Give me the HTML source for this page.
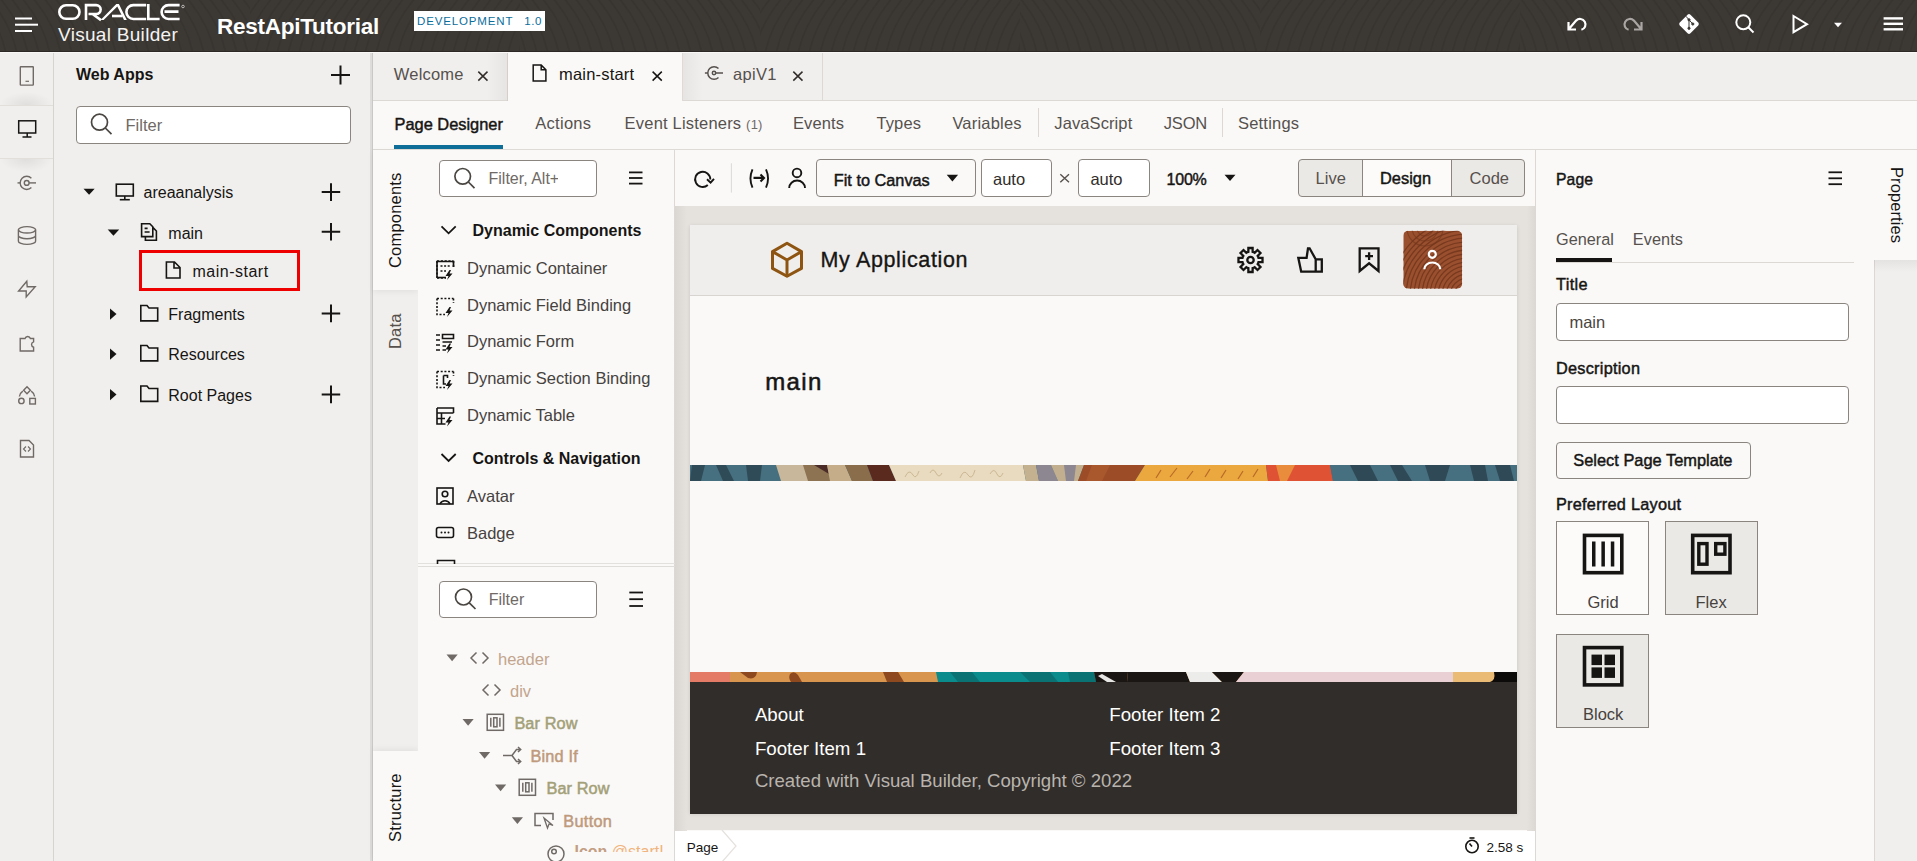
<!DOCTYPE html>
<html><head><meta charset="utf-8">
<style>
*{box-sizing:border-box;margin:0;padding:0}
html,body{width:1917px;height:861px;overflow:hidden;background:#faf9f8;font-family:"Liberation Sans",sans-serif;color:#161513}
.a{position:absolute}
.t{position:absolute;white-space:nowrap;line-height:1}
svg{position:absolute;overflow:visible}
/* header */
#hdr{left:0;top:0;width:1917px;height:52px;background:#3c3834;overflow:hidden;border-bottom:1px solid #2c2825}
/* left icon bar */
#ibar{left:0;top:52px;width:54px;height:809px;background:#f1efed;border-right:1px solid #d6d4d1}
#wapps{left:54px;top:52px;width:317px;height:809px;background:#f1efed}
#div1{left:370px;top:52px;width:3px;height:809px;background:linear-gradient(to right,#dddcda 0,#dddcda 2px,#c9c8c6 2px,#c9c8c6 3px)}
/* center */
#tabs{left:373px;top:52px;width:1544px;height:49px;background:#f1efed;border-bottom:1px solid #dcd9d5}
#subtabs{left:373px;top:101px;width:1544px;height:49px;background:#faf9f8;border-bottom:1px solid #dedbd7}
#vtabs{left:373px;top:150px;width:45px;height:711px;background:#f1efed}
#comp{left:418px;top:150px;width:257px;height:711px;background:#faf9f8;border-right:1px solid #dcd9d5}
#canvas{left:675px;top:206px;width:860px;height:624px;background:#e5e2de}
#ctool{left:675px;top:150px;width:860px;height:56px;background:#faf9f8}
#props{left:1535px;top:150px;width:339px;height:711px;background:#faf9f8;border-left:1px solid #dcd9d5;border-right:1px solid #dcd9d5}
#pstrip{left:1874px;top:150px;width:43px;height:711px;background:#f1efed}
.inp{position:absolute;background:#fff;border:1px solid #8b8580;border-radius:4px}
.ph{color:#6f6a66}
.ic{stroke:#161513;fill:none;stroke-width:1.6}
</style></head><body>

<!-- HEADER -->
<div id="hdr" class="a">
  <svg width="1917" height="52" style="left:0;top:0"><defs><clipPath id="hc0"><rect x="0" y="0" width="250" height="51"/></clipPath><clipPath id="hc1"><rect x="250" y="0" width="270" height="51"/></clipPath><clipPath id="hc2"><rect x="520" y="0" width="240" height="51"/></clipPath><clipPath id="hc3"><rect x="760" y="0" width="260" height="51"/></clipPath><clipPath id="hc4"><rect x="1020" y="0" width="240" height="51"/></clipPath><clipPath id="hc5"><rect x="1260" y="0" width="260" height="51"/></clipPath><clipPath id="hc6"><rect x="1520" y="0" width="220" height="51"/></clipPath><clipPath id="hc7"><rect x="1740" y="0" width="177" height="51"/></clipPath></defs><path clip-path="url(#hc0)" d="M-66,-2 Q-43,26 -38,54 M-55,-2 Q-32,26 -27,54 M-44,-2 Q-21,26 -16,54 M-33,-2 Q-10,26 -5,54 M-22,-2 Q1,26 6,54 M-11,-2 Q12,26 17,54 M0,-2 Q23,26 28,54 M11,-2 Q34,26 39,54 M22,-2 Q45,26 50,54 M33,-2 Q56,26 61,54 M44,-2 Q67,26 72,54 M55,-2 Q78,26 83,54 M66,-2 Q89,26 94,54 M77,-2 Q100,26 105,54 M88,-2 Q111,26 116,54 M99,-2 Q122,26 127,54 M110,-2 Q133,26 138,54 M121,-2 Q144,26 149,54 M132,-2 Q155,26 160,54 M143,-2 Q166,26 171,54 M154,-2 Q177,26 182,54 M165,-2 Q188,26 193,54 M176,-2 Q199,26 204,54 M187,-2 Q210,26 215,54 M198,-2 Q221,26 226,54 M209,-2 Q232,26 237,54 M220,-2 Q243,26 248,54 M231,-2 Q254,26 259,54 M242,-2 Q265,26 270,54 M253,-2 Q276,26 281,54 M264,-2 Q287,26 292,54 M275,-2 Q298,26 303,54 M286,-2 Q309,26 314,54 M297,-2 Q320,26 325,54" stroke="#33302c" stroke-width="1.5" fill="none" opacity="0.45"/><path clip-path="url(#hc1)" d="M184,-2 Q161,26 156,54 M195,-2 Q172,26 167,54 M206,-2 Q183,26 178,54 M217,-2 Q194,26 189,54 M228,-2 Q205,26 200,54 M239,-2 Q216,26 211,54 M250,-2 Q227,26 222,54 M261,-2 Q238,26 233,54 M272,-2 Q249,26 244,54 M283,-2 Q260,26 255,54 M294,-2 Q271,26 266,54 M305,-2 Q282,26 277,54 M316,-2 Q293,26 288,54 M327,-2 Q304,26 299,54 M338,-2 Q315,26 310,54 M349,-2 Q326,26 321,54 M360,-2 Q337,26 332,54 M371,-2 Q348,26 343,54 M382,-2 Q359,26 354,54 M393,-2 Q370,26 365,54 M404,-2 Q381,26 376,54 M415,-2 Q392,26 387,54 M426,-2 Q403,26 398,54 M437,-2 Q414,26 409,54 M448,-2 Q425,26 420,54 M459,-2 Q436,26 431,54 M470,-2 Q447,26 442,54 M481,-2 Q458,26 453,54 M492,-2 Q469,26 464,54 M503,-2 Q480,26 475,54 M514,-2 Q491,26 486,54 M525,-2 Q502,26 497,54 M536,-2 Q513,26 508,54 M547,-2 Q524,26 519,54 M558,-2 Q535,26 530,54 M569,-2 Q546,26 541,54" stroke="#33302c" stroke-width="1.5" fill="none" opacity="0.45"/><path clip-path="url(#hc2)" d="M454,-2 Q477,26 482,54 M465,-2 Q488,26 493,54 M476,-2 Q499,26 504,54 M487,-2 Q510,26 515,54 M498,-2 Q521,26 526,54 M509,-2 Q532,26 537,54 M520,-2 Q543,26 548,54 M531,-2 Q554,26 559,54 M542,-2 Q565,26 570,54 M553,-2 Q576,26 581,54 M564,-2 Q587,26 592,54 M575,-2 Q598,26 603,54 M586,-2 Q609,26 614,54 M597,-2 Q620,26 625,54 M608,-2 Q631,26 636,54 M619,-2 Q642,26 647,54 M630,-2 Q653,26 658,54 M641,-2 Q664,26 669,54 M652,-2 Q675,26 680,54 M663,-2 Q686,26 691,54 M674,-2 Q697,26 702,54 M685,-2 Q708,26 713,54 M696,-2 Q719,26 724,54 M707,-2 Q730,26 735,54 M718,-2 Q741,26 746,54 M729,-2 Q752,26 757,54 M740,-2 Q763,26 768,54 M751,-2 Q774,26 779,54 M762,-2 Q785,26 790,54 M773,-2 Q796,26 801,54 M784,-2 Q807,26 812,54 M795,-2 Q818,26 823,54 M806,-2 Q829,26 834,54" stroke="#33302c" stroke-width="1.5" fill="none" opacity="0.45"/><path clip-path="url(#hc3)" d="M694,-2 Q671,26 666,54 M705,-2 Q682,26 677,54 M716,-2 Q693,26 688,54 M727,-2 Q704,26 699,54 M738,-2 Q715,26 710,54 M749,-2 Q726,26 721,54 M760,-2 Q737,26 732,54 M771,-2 Q748,26 743,54 M782,-2 Q759,26 754,54 M793,-2 Q770,26 765,54 M804,-2 Q781,26 776,54 M815,-2 Q792,26 787,54 M826,-2 Q803,26 798,54 M837,-2 Q814,26 809,54 M848,-2 Q825,26 820,54 M859,-2 Q836,26 831,54 M870,-2 Q847,26 842,54 M881,-2 Q858,26 853,54 M892,-2 Q869,26 864,54 M903,-2 Q880,26 875,54 M914,-2 Q891,26 886,54 M925,-2 Q902,26 897,54 M936,-2 Q913,26 908,54 M947,-2 Q924,26 919,54 M958,-2 Q935,26 930,54 M969,-2 Q946,26 941,54 M980,-2 Q957,26 952,54 M991,-2 Q968,26 963,54 M1002,-2 Q979,26 974,54 M1013,-2 Q990,26 985,54 M1024,-2 Q1001,26 996,54 M1035,-2 Q1012,26 1007,54 M1046,-2 Q1023,26 1018,54 M1057,-2 Q1034,26 1029,54 M1068,-2 Q1045,26 1040,54" stroke="#33302c" stroke-width="1.5" fill="none" opacity="0.45"/><path clip-path="url(#hc4)" d="M954,-2 Q977,26 982,54 M965,-2 Q988,26 993,54 M976,-2 Q999,26 1004,54 M987,-2 Q1010,26 1015,54 M998,-2 Q1021,26 1026,54 M1009,-2 Q1032,26 1037,54 M1020,-2 Q1043,26 1048,54 M1031,-2 Q1054,26 1059,54 M1042,-2 Q1065,26 1070,54 M1053,-2 Q1076,26 1081,54 M1064,-2 Q1087,26 1092,54 M1075,-2 Q1098,26 1103,54 M1086,-2 Q1109,26 1114,54 M1097,-2 Q1120,26 1125,54 M1108,-2 Q1131,26 1136,54 M1119,-2 Q1142,26 1147,54 M1130,-2 Q1153,26 1158,54 M1141,-2 Q1164,26 1169,54 M1152,-2 Q1175,26 1180,54 M1163,-2 Q1186,26 1191,54 M1174,-2 Q1197,26 1202,54 M1185,-2 Q1208,26 1213,54 M1196,-2 Q1219,26 1224,54 M1207,-2 Q1230,26 1235,54 M1218,-2 Q1241,26 1246,54 M1229,-2 Q1252,26 1257,54 M1240,-2 Q1263,26 1268,54 M1251,-2 Q1274,26 1279,54 M1262,-2 Q1285,26 1290,54 M1273,-2 Q1296,26 1301,54 M1284,-2 Q1307,26 1312,54 M1295,-2 Q1318,26 1323,54 M1306,-2 Q1329,26 1334,54" stroke="#33302c" stroke-width="1.5" fill="none" opacity="0.45"/><path clip-path="url(#hc5)" d="M1194,-2 Q1171,26 1166,54 M1205,-2 Q1182,26 1177,54 M1216,-2 Q1193,26 1188,54 M1227,-2 Q1204,26 1199,54 M1238,-2 Q1215,26 1210,54 M1249,-2 Q1226,26 1221,54 M1260,-2 Q1237,26 1232,54 M1271,-2 Q1248,26 1243,54 M1282,-2 Q1259,26 1254,54 M1293,-2 Q1270,26 1265,54 M1304,-2 Q1281,26 1276,54 M1315,-2 Q1292,26 1287,54 M1326,-2 Q1303,26 1298,54 M1337,-2 Q1314,26 1309,54 M1348,-2 Q1325,26 1320,54 M1359,-2 Q1336,26 1331,54 M1370,-2 Q1347,26 1342,54 M1381,-2 Q1358,26 1353,54 M1392,-2 Q1369,26 1364,54 M1403,-2 Q1380,26 1375,54 M1414,-2 Q1391,26 1386,54 M1425,-2 Q1402,26 1397,54 M1436,-2 Q1413,26 1408,54 M1447,-2 Q1424,26 1419,54 M1458,-2 Q1435,26 1430,54 M1469,-2 Q1446,26 1441,54 M1480,-2 Q1457,26 1452,54 M1491,-2 Q1468,26 1463,54 M1502,-2 Q1479,26 1474,54 M1513,-2 Q1490,26 1485,54 M1524,-2 Q1501,26 1496,54 M1535,-2 Q1512,26 1507,54 M1546,-2 Q1523,26 1518,54 M1557,-2 Q1534,26 1529,54 M1568,-2 Q1545,26 1540,54" stroke="#33302c" stroke-width="1.5" fill="none" opacity="0.45"/><path clip-path="url(#hc6)" d="M1454,-2 Q1477,26 1482,54 M1465,-2 Q1488,26 1493,54 M1476,-2 Q1499,26 1504,54 M1487,-2 Q1510,26 1515,54 M1498,-2 Q1521,26 1526,54 M1509,-2 Q1532,26 1537,54 M1520,-2 Q1543,26 1548,54 M1531,-2 Q1554,26 1559,54 M1542,-2 Q1565,26 1570,54 M1553,-2 Q1576,26 1581,54 M1564,-2 Q1587,26 1592,54 M1575,-2 Q1598,26 1603,54 M1586,-2 Q1609,26 1614,54 M1597,-2 Q1620,26 1625,54 M1608,-2 Q1631,26 1636,54 M1619,-2 Q1642,26 1647,54 M1630,-2 Q1653,26 1658,54 M1641,-2 Q1664,26 1669,54 M1652,-2 Q1675,26 1680,54 M1663,-2 Q1686,26 1691,54 M1674,-2 Q1697,26 1702,54 M1685,-2 Q1708,26 1713,54 M1696,-2 Q1719,26 1724,54 M1707,-2 Q1730,26 1735,54 M1718,-2 Q1741,26 1746,54 M1729,-2 Q1752,26 1757,54 M1740,-2 Q1763,26 1768,54 M1751,-2 Q1774,26 1779,54 M1762,-2 Q1785,26 1790,54 M1773,-2 Q1796,26 1801,54 M1784,-2 Q1807,26 1812,54 M1795,-2 Q1818,26 1823,54" stroke="#33302c" stroke-width="1.5" fill="none" opacity="0.45"/><path clip-path="url(#hc7)" d="M1674,-2 Q1651,26 1646,54 M1685,-2 Q1662,26 1657,54 M1696,-2 Q1673,26 1668,54 M1707,-2 Q1684,26 1679,54 M1718,-2 Q1695,26 1690,54 M1729,-2 Q1706,26 1701,54 M1740,-2 Q1717,26 1712,54 M1751,-2 Q1728,26 1723,54 M1762,-2 Q1739,26 1734,54 M1773,-2 Q1750,26 1745,54 M1784,-2 Q1761,26 1756,54 M1795,-2 Q1772,26 1767,54 M1806,-2 Q1783,26 1778,54 M1817,-2 Q1794,26 1789,54 M1828,-2 Q1805,26 1800,54 M1839,-2 Q1816,26 1811,54 M1850,-2 Q1827,26 1822,54 M1861,-2 Q1838,26 1833,54 M1872,-2 Q1849,26 1844,54 M1883,-2 Q1860,26 1855,54 M1894,-2 Q1871,26 1866,54 M1905,-2 Q1882,26 1877,54 M1916,-2 Q1893,26 1888,54 M1927,-2 Q1904,26 1899,54 M1938,-2 Q1915,26 1910,54 M1949,-2 Q1926,26 1921,54 M1960,-2 Q1937,26 1932,54 M1971,-2 Q1948,26 1943,54" stroke="#33302c" stroke-width="1.5" fill="none" opacity="0.45"/></svg>
  <svg width="1917" height="52" style="left:0;top:0">
    <g stroke="#fff" stroke-width="2" fill="none">
      <line x1="15" y1="18.5" x2="32" y2="18.5"/><line x1="15" y1="24.7" x2="38" y2="24.7"/><line x1="15" y1="31" x2="32" y2="31"/>
    </g>
    <g stroke="#fff" stroke-width="2.6" fill="none">
      <rect x="59.3" y="5.3" width="20.2" height="13.5" rx="6.75"/>
      <path d="M86,20.1 V5.15 H96.2 A4.45,4.45 0 0 1 96.2,14.05 H88.5 M92.5,14.05 L101,20.1" stroke-linejoin="miter"/>
      <path d="M112,16 H122.5"/>
      <path d="M146.2,5.15 H133.3 A6.85,6.85 0 0 0 133.3,18.95 H146.2"/>
      <path d="M148.3,4 V18.95 H159.6"/>
      <path d="M179.6,5.15 H168.5 A6.85,6.85 0 0 0 168.5,18.95 H179.6 M164.5,11.6 H178.5"/>
    </g>
    <path d="M100.6,20.1 L116.3,4 H118.9 L126.8,20.1 H124 L117.3,6.6 L103.6,20.1 Z" fill="#fff"/>
    <circle cx="183" cy="6.5" r="1.3" fill="none" stroke="#fff" stroke-width="0.6"/>
    <!-- undo -->
    <g stroke="#fff" stroke-width="2.2" fill="none">
      <path d="M1568.5,22 V29.5 H1576 M1568.5,29.5 L1576.1,20.6 A5.5,5.5 0 1 1 1581.4,29.8"/>
    </g>
    <g stroke="#a9a6a3" stroke-width="2.2" fill="none">
      <path d="M1641.5,22 V29.5 H1634 M1641.5,29.5 L1633.9,20.6 A5.5,5.5 0 1 0 1628.6,29.8"/>
    </g>
    <!-- git -->
    <rect x="1681.5" y="16.5" width="15" height="15" rx="2" fill="#fff" transform="rotate(45 1689 24)"/>
    <g stroke="#3a3632" stroke-width="1" fill="#3a3632">
      <line x1="1686" y1="16.3" x2="1689" y2="19.8"/><line x1="1689" y1="19.8" x2="1689" y2="28.3"/><line x1="1689" y1="19.8" x2="1692.8" y2="24"/>
      <circle cx="1689" cy="19.8" r="1.1"/><circle cx="1689" cy="28.3" r="1.1"/><circle cx="1692.8" cy="24" r="1.1"/>
    </g>
    <!-- search -->
    <g stroke="#fff" stroke-width="2" fill="none">
      <circle cx="1743.3" cy="22.3" r="7"/><line x1="1748.5" y1="27.5" x2="1753.5" y2="32.5"/>
      <path d="M1793.5,16 L1807,24.2 L1793.5,32.2 Z" stroke-linejoin="miter"/>
    </g>
    <path d="M1834,22.8 H1842 L1838,27.3 Z" fill="#fff"/>
    <g stroke="#fff" stroke-width="2.4">
      <line x1="1883.6" y1="18.4" x2="1903" y2="18.4"/><line x1="1883.6" y1="23.8" x2="1903" y2="23.8"/><line x1="1883.6" y1="29.3" x2="1903" y2="29.3"/>
    </g>
  </svg>
  <div class="t" style="left:58px;top:24.9px;font-size:19px;color:#f4f3f2;letter-spacing:0.3px">Visual Builder</div>
  <div class="t" style="left:217px;top:16.1px;font-size:22.5px;font-weight:bold;color:#fff;letter-spacing:-0.25px">RestApiTutorial</div>
  <div class="a" style="left:414px;top:11px;width:131px;height:20px;background:#fff"></div>
  <div class="t" style="left:417.1px;top:15.7px;font-size:11.5px;color:#0a6e9c;letter-spacing:0.85px">DEVELOPMENT</div>
  <div class="t" style="left:524.2px;top:15.7px;font-size:11.5px;color:#0a6e9c;letter-spacing:0.6px">1.0</div>
</div>

<!-- LEFT ICON BAR -->
<div class="a" style="left:0;top:52px;width:1917px;height:1px;background:#f9f8f7;z-index:1"></div>
<div id="ibar" class="a"></div>
<div class="a" style="left:0;top:92px;width:53px;height:13px;background:radial-gradient(ellipse 50% 100% at 50% 100%,rgba(0,0,0,0.07),rgba(0,0,0,0))"></div>
<div class="a" style="left:0;top:159px;width:53px;height:13px;background:radial-gradient(ellipse 50% 100% at 50% 0%,rgba(0,0,0,0.07),rgba(0,0,0,0))"></div>
<div class="a" style="left:0;top:105px;width:53px;height:54px;background:#f1efed;border-top:1px solid #e2dfdb;border-bottom:1px solid #e2dfdb"></div>
<svg width="54" height="810" style="left:0;top:0">
  <g stroke="#6f6a66" stroke-width="1.4" fill="none">
    <rect x="20.3" y="66.8" width="13" height="18.3" rx="0.5"/>
    <line x1="25.5" y1="81.3" x2="29" y2="81.3" stroke="#6f6a66" stroke-width="1.2"/>
  </g>
  <g stroke="#161513" stroke-width="1.5" fill="none">
    <rect x="18.7" y="120.8" width="17" height="12.2"/>
    <line x1="27.2" y1="133" x2="27.2" y2="137"/><line x1="22.5" y1="137" x2="31.5" y2="137"/>
  </g>
  <g stroke="#6f6a66" stroke-width="1.4" fill="none">
    <path d="M31.4,178.2 A6.6,6.6 0 1 0 31.4,187.6"/><circle cx="26.7" cy="182.9" r="2.4"/><line x1="29.1" y1="182.9" x2="36" y2="182.9"/><line x1="17.5" y1="182.9" x2="20.1" y2="182.9"/>
    <ellipse cx="27" cy="229.8" rx="8.6" ry="3.2"/>
    <path d="M18.4,229.8 V241.2 A8.6,3.2 0 0 0 35.6,241.2 V229.8 M18.4,235.5 A8.6,3.2 0 0 0 35.6,235.5"/>
    <path d="M26.8,281.2 L18.6,291 H26.2 V297 L35.2,286.8 H27.2 Z" stroke-linejoin="miter"/>
    <path d="M20.2,351 V338.5 H25 A2.8,2.8 0 0 1 30.4,338.5 H33.6 V341.8 A2.8,2.8 0 0 0 33.6,347.2 V351 Z"/>
    <path d="M27,386.8 L30.4,390.3 L27,393.8 L23.6,390.3 Z"/>
    <circle cx="21.4" cy="400.9" r="2.7"/><rect x="29.8" y="398.4" width="5.6" height="5.6"/>
    <path d="M19.4,396.5 A8,8 0 0 1 22.8,391.2 M31.2,391.2 A8,8 0 0 1 34.6,396.5"/>
    <path d="M20.5,440.5 H29 L33.5,445 V457 H20.5 Z"/>
    <path d="M26,446.5 L23.5,449 L26,451.5 M28,446.5 L30.5,449 L28,451.5" stroke-width="1.1"/>
  </g>
</svg>

<!-- WEB APPS -->
<div id="wapps" class="a"></div>
<div id="div1" class="a"></div>
<div class="t" style="left:76px;top:66.7px;font-size:16px;font-weight:bold">Web Apps</div>
<div class="inp" style="left:76px;top:106px;width:275px;height:38px"></div>
<div class="t ph" style="left:125.5px;top:116.5px;font-size:16.5px">Filter</div>
<div class="t" style="left:143.5px;top:184.5px;font-size:16px">areaanalysis</div>
<div class="t" style="left:168.3px;top:226.1px;font-size:16px">main</div>
<div class="t" style="left:192.5px;top:264px;font-size:16px;letter-spacing:0.5px">main-start</div>
<div class="t" style="left:168.3px;top:307px;font-size:16px">Fragments</div>
<div class="t" style="left:168.3px;top:347px;font-size:16px">Resources</div>
<div class="t" style="left:168.3px;top:387.5px;font-size:16px">Root Pages</div>
<div class="a" style="left:139px;top:250px;width:161px;height:41px;border:3px solid #ee0000"></div>
<svg width="380" height="861" style="left:0;top:0">
  <g stroke="#161513" stroke-width="2" fill="none">
    <path d="M331,75 H350 M340.5,65.5 V84.5"/>
    <path d="M321.7,192 H340.2 M331,183.3 V201"/>
    <path d="M321.7,231.8 H340.2 M331,223 V240.6"/>
    <path d="M321.7,313.4 H340.2 M331,304.6 V322.2"/>
    <path d="M321.7,394.4 H340.2 M331,385.6 V403.2"/>
  </g>
  <g stroke="#4a4642" stroke-width="1.7" fill="none">
    <circle cx="99.5" cy="122.2" r="8"/><line x1="105.3" y1="128" x2="111.5" y2="134.2"/>
  </g>
  <g fill="#161513">
    <path d="M83.5,188.8 H94.7 L89.1,194.7 Z"/>
    <path d="M107.7,229.5 H119.2 L113.45,235.7 Z"/>
    <path d="M110,308.5 L116.5,314.1 L110,319.8 Z"/>
    <path d="M110,348.5 L116.5,354.1 L110,359.8 Z"/>
    <path d="M110,389 L116.5,394.6 L110,400.2 Z"/>
  </g>
  <g stroke="#161513" stroke-width="1.6" fill="none">
    <rect x="116.3" y="184.2" width="17" height="11.8"/>
    <line x1="124.8" y1="196" x2="124.8" y2="199.7"/><line x1="119.8" y1="199.7" x2="129.8" y2="199.7"/>
    <path d="M141.6,223.8 H149.8 L152.8,226.8 V236.6 H141.6 Z M144.6,228.4 H147.6 M144.6,232 H149.6 M145.4,236.6 V240.2 H156.4 V231 L152.8,227.4"/>
    <path d="M166.4,262 H174.5 L180,267.5 V278 H166.4 Z M174,262 V268 H180"/>
    <path d="M140.8,305.5 H147 L149,308 H157.7 V320.9 H140.8 Z"/>
    <path d="M140.8,345.5 H147 L149,348 H157.7 V360.9 H140.8 Z"/>
    <path d="M140.8,386 H147 L149,388.5 H157.7 V401.4 H140.8 Z"/>
  </g>
</svg>

<!-- CENTER TABS -->
<div id="tabs" class="a"></div>
<div class="a" style="left:487px;top:52px;width:20px;height:48px;background:linear-gradient(to right,rgba(0,0,0,0),rgba(0,0,0,0.045))"></div>
<div class="a" style="left:683px;top:52px;width:20px;height:48px;background:linear-gradient(to left,rgba(0,0,0,0),rgba(0,0,0,0.045))"></div>
<div class="a" style="left:507px;top:52px;width:176px;height:49px;background:#faf9f8;border-left:1px solid #d3d0cc;border-right:1px solid #dedbd7"></div>
<div class="a" style="left:822px;top:53px;width:1px;height:47px;background:#dcd9d5"></div>
<div class="t" style="left:393.8px;top:65.5px;font-size:16.5px;color:#56514d;letter-spacing:0.2px">Welcome</div>
<div class="t" style="left:559px;top:65.5px;font-size:16.5px;color:#161513;letter-spacing:0.2px">main-start</div>
<div class="t" style="left:733px;top:65.5px;font-size:16.5px;color:#56514d;letter-spacing:0.3px">apiV1</div>
<svg width="900" height="110" style="left:0;top:0">
  <g stroke="#312d2a" stroke-width="1.5" fill="none">
    <path d="M478.3,71.6 L487.5,80.6 M487.5,71.6 L478.3,80.6"/>
    <path d="M652.6,71.6 L661.8,80.6 M661.8,71.6 L652.6,80.6" stroke="#161513"/>
    <path d="M793.3,71.6 L802.5,80.6 M802.5,71.6 L793.3,80.6"/>
  </g>
  <path d="M533.2,65.1 H541.2 L545.9,69.8 V81 H533.2 Z M541.2,65.1 V69.8 H545.9" stroke="#161513" stroke-width="1.5" fill="none" stroke-linejoin="miter"/>
  <g stroke="#56514d" stroke-width="1.5" fill="none">
    <path d="M718.5,68.5 A6.3,6.3 0 1 0 718.5,77.5"/><circle cx="714" cy="73" r="1.7"/><line x1="715.7" y1="73" x2="723" y2="73"/><line x1="704.9" y1="73" x2="707.7" y2="73"/>
  </g>
</svg>

<div id="subtabs" class="a"></div>
<div class="t" style="left:394.5px;top:116px;font-size:16.4px;letter-spacing:0px;-webkit-text-stroke:0.45px #161513">Page Designer</div>
<div class="a" style="left:394px;top:145px;width:109px;height:4px;background:#0f6e98"></div>
<div class="t" style="left:535.2px;top:115px;font-size:16.5px;color:#56514d;letter-spacing:0.3px">Actions</div>
<div class="t" style="left:624.6px;top:115px;font-size:16.5px;color:#56514d;letter-spacing:0.2px">Event Listeners <span style="font-size:13px;color:#6f6a66">(1)</span></div>
<div class="t" style="left:793px;top:115px;font-size:16.5px;color:#56514d;letter-spacing:0.1px">Events</div>
<div class="t" style="left:876.5px;top:115px;font-size:16.5px;color:#56514d;letter-spacing:0.1px">Types</div>
<div class="t" style="left:952.4px;top:115px;font-size:16.5px;color:#56514d;letter-spacing:0.2px">Variables</div>
<div class="a" style="left:1038px;top:108px;width:1px;height:29px;background:#dcd9d5"></div>
<div class="t" style="left:1054.3px;top:115px;font-size:16.5px;color:#56514d;letter-spacing:0.1px">JavaScript</div>
<div class="t" style="left:1163.8px;top:115px;font-size:16.5px;color:#56514d;letter-spacing:-0.2px">JSON</div>
<div class="a" style="left:1222px;top:108px;width:1px;height:29px;background:#dcd9d5"></div>
<div class="t" style="left:1238px;top:115px;font-size:16.5px;color:#56514d;letter-spacing:0.2px">Settings</div>

<!-- LEFT VERTICAL TABS + COMPONENTS -->
<div id="vtabs" class="a"></div>
<div class="a" style="left:373px;top:150px;width:45px;height:140px;background:#faf9f8;box-shadow:0 2px 6px rgba(0,0,0,0.06)"></div>
<div class="a" style="left:373px;top:751px;width:45px;height:110px;background:#faf9f8;box-shadow:0 -2px 6px rgba(0,0,0,0.06)"></div>
<div class="t" style="left:386.5px;top:268px;font-size:16.5px;color:#161513;transform:rotate(-90deg);transform-origin:left top;letter-spacing:0.2px">Components</div>
<div class="t" style="left:386.5px;top:348.5px;font-size:16.5px;color:#56514d;transform:rotate(-90deg);transform-origin:left top;letter-spacing:0.2px">Data</div>
<div class="t" style="left:386.5px;top:841.5px;font-size:16.5px;color:#161513;transform:rotate(-90deg);transform-origin:left top;letter-spacing:0.2px">Structure</div>
<div id="comp" class="a"></div>
<div class="a" style="left:418px;top:563px;width:257px;height:1px;background:#e3e1de"></div>
<div class="a" style="left:418px;top:566px;width:257px;height:1px;background:#dfddda"></div>
<div class="inp" style="left:439px;top:160px;width:158px;height:37px"></div>
<div class="a" style="left:487px;top:165px;width:70.5px;height:26px;overflow:hidden"><div class="t ph" style="left:1.5px;top:6px;font-size:16px">Filter, Alt+Shift+C</div></div>
<div class="inp" style="left:439px;top:581px;width:158px;height:37px"></div>
<div class="t ph" style="left:488.7px;top:591.5px;font-size:16px">Filter</div>

<div class="t" style="left:472.5px;top:223px;font-size:16px;font-weight:bold;color:#161513">Dynamic Components</div>
<div class="t" style="left:467px;top:260px;font-size:16.5px;color:#46423e">Dynamic Container</div>
<div class="t" style="left:467px;top:297px;font-size:16.5px;color:#46423e">Dynamic Field Binding</div>
<div class="t" style="left:467px;top:333.3px;font-size:16.5px;color:#46423e">Dynamic Form</div>
<div class="t" style="left:467px;top:370.1px;font-size:16.5px;color:#46423e">Dynamic Section Binding</div>
<div class="t" style="left:467px;top:406.5px;font-size:16.5px;color:#46423e">Dynamic Table</div>
<div class="t" style="left:472.5px;top:450.7px;font-size:16px;font-weight:bold;color:#161513">Controls &amp; Navigation</div>
<div class="t" style="left:467px;top:488px;font-size:16.5px;color:#46423e">Avatar</div>
<div class="t" style="left:467px;top:525px;font-size:16.5px;color:#46423e">Badge</div>

<div class="t" style="left:498px;top:651px;font-size:16.5px;color:#c3a58d">header</div>
<div class="t" style="left:510px;top:682.7px;font-size:16.5px;color:#c3a58d">div</div>
<div class="t" style="left:514.4px;top:715.2px;font-size:16.3px;color:#a3a077;-webkit-text-stroke:0.5px #a3a077;letter-spacing:0.1px">Bar Row</div>
<div class="t" style="left:530.4px;top:748.1px;font-size:16.3px;color:#bf9a7c;-webkit-text-stroke:0.5px #bf9a7c;letter-spacing:0.2px">Bind If</div>
<div class="t" style="left:546.5px;top:780.2px;font-size:16.3px;color:#a3a077;-webkit-text-stroke:0.5px #a3a077;letter-spacing:0.1px">Bar Row</div>
<div class="t" style="left:563.3px;top:812.9px;font-size:16.3px;color:#bf9a7c;-webkit-text-stroke:0.5px #bf9a7c;letter-spacing:0.3px">Button</div>
<div class="a" style="left:540px;top:838px;width:130px;height:14px;overflow:hidden"><div class="t" style="left:34.5px;top:6px;font-size:16px;font-weight:bold;color:#c39e82">Icon <span style="font-weight:normal;color:#f0b47c">@startI</span></div></div>

<svg width="700" height="861" style="left:0;top:0">
  <g stroke="#161513" stroke-width="1.8" fill="none">
    <line x1="629" y1="172.4" x2="642.5" y2="172.4"/><line x1="629" y1="178" x2="642.5" y2="178"/><line x1="629" y1="183.6" x2="642.5" y2="183.6"/>
    <line x1="629.3" y1="592.5" x2="643" y2="592.5"/><line x1="629.3" y1="599.2" x2="643" y2="599.2"/><line x1="629.3" y1="606" x2="643" y2="606"/>
    <path d="M441.5,226.3 L448.6,233.3 L455.7,226.3"/>
    <path d="M441.5,454 L448.6,461 L455.7,454"/>
  </g>
  <g stroke="#4a4642" stroke-width="1.7" fill="none">
    <circle cx="462.7" cy="176.3" r="7.8"/><line x1="468.4" y1="182" x2="474.5" y2="188.2"/>
    <circle cx="463.5" cy="597" r="8"/><line x1="469.3" y1="602.8" x2="475.5" y2="609"/>
  </g>
  <!-- component icons -->
  <g stroke="#161513" stroke-width="1.6" fill="none">
    <path d="M437,277.5 V261.5 H453.5 V267"/>
    <path d="M437,277.5 H446"/>
    <path d="M440.5,266 H450" stroke-dasharray="2,1.6"/>
    <path d="M440.5,271 H446" stroke-dasharray="2,1.6"/>
    <path d="M437,261 H453.5 M437,261 V278 M453.5,261 V267 M437,278 H446" stroke-dasharray="2.2,1.6"/>
  </g>
  <g fill="#161513">
    <path d="M449.5,270 L445.5,276 H448.5 L447,280 L452.5,273.5 H449.5 L451,270 Z"/>
    <path d="M449.5,307 L445.5,313 H448.5 L447,317 L452.5,310.5 H449.5 L451,307 Z"/>
    <path d="M449.5,343.5 L445.5,349.5 H448.5 L447,353.5 L452.5,347 H449.5 L451,343.5 Z"/>
    <path d="M449.5,380 L445.5,386 H448.5 L447,390 L452.5,383.5 H449.5 L451,380 Z"/>
    <path d="M449.5,416.5 L445.5,422.5 H448.5 L447,426.5 L452.5,420 H449.5 L451,416.5 Z"/>
  </g>
  <g stroke="#161513" stroke-width="1.6" fill="none" stroke-dasharray="2,1.7">
    <path d="M437,298.5 H453.5 M437,298.5 V314.5 H445"/><path d="M453.5,298.5 V303"/>
    <path d="M437,371.5 H453.5 M437,371.5 V387.5 H445"/><path d="M453.5,371.5 V376"/>
  </g>
  <g stroke="#161513" stroke-width="1.6" fill="none">
    <path d="M443.5,375.5 V384 H446 M443.5,375.5 H447.5 V378"/>
    <path d="M436,335 H440 M436,340 H440 M436,345 H440 M436,350 H440" stroke-dasharray="none"/>
    <path d="M442.5,334.5 H453.5 V338.5 H442.5 Z M442.5,342 H452 M442.5,346 H446 M442.5,350 H446"/>
    <path d="M437,408 H453.5 V413 M437,408 V424 H445.5 M437,413 H453.5 M441.5,413 V424 M437,418.5 H445"/>
    <rect x="437" y="488" width="16" height="16"/>
    <circle cx="445" cy="494" r="2.8"/><path d="M440,504 A5.5,5.5 0 0 1 450,504"/>
    <rect x="436.5" y="527.5" width="17" height="10" rx="2"/>
  </g>
  <g fill="#161513"><circle cx="441.5" cy="532.5" r="1"/><circle cx="445" cy="532.5" r="1"/><circle cx="448.5" cy="532.5" r="1"/></g>
  <path d="M437.5,564 V560.5 H454.5 V564" stroke="#161513" stroke-width="1.6" fill="none"/>
  <!-- structure tree icons -->
  <g fill="#6f6a66">
    <path d="M446.5,654.6 H457.7 L452.1,661.3 Z"/>
    <path d="M462.5,719 H473.7 L468.1,725.7 Z"/>
    <path d="M479,752 H490.2 L484.6,758.7 Z"/>
    <path d="M495,784.5 H506.2 L500.6,791.2 Z"/>
    <path d="M511.8,817.3 H523 L517.4,824 Z"/>
  </g>
  <g stroke="#6f6a66" stroke-width="1.5" fill="none">
    <path d="M476.5,652.5 L471,658 L476.5,663.5 M482.5,652.5 L488,658 L482.5,663.5"/>
    <path d="M488.5,684.5 L483,690 L488.5,695.5 M494.5,684.5 L500,690 L494.5,695.5"/>
    <rect x="487.2" y="714.3" width="16.3" height="16"/><path d="M490.8,717.8 V726.8 M499.9,717.8 V726.8"/><rect x="493.7" y="717.8" width="3.3" height="9"/>
    <rect x="519.2" y="779.3" width="16.3" height="16"/><path d="M522.8,782.8 V791.8 M531.9,782.8 V791.8"/><rect x="525.7" y="782.8" width="3.3" height="9"/>
    <path d="M503,755.5 H512 L516.5,749.5 H520.5 M512,755.5 L516.5,761.5 H520.5 M518,747 L520.7,749.5 L518,752 M518,759 L520.7,761.5 L518,764"/>
    <path d="M541,825.5 H535 V813.5 H553 V820"/><path d="M544,818 L547.5,828 L549,824 L553,825.5 Z" stroke-width="1.3"/>
    <circle cx="556" cy="854" r="8"/><circle cx="554" cy="851.5" r="2.3"/>
  </g>
</svg>

<div id="ctool" class="a"></div>
<!-- canvas toolbar -->
<svg width="1917" height="861" style="left:0;top:0">
  <g stroke="#161513" stroke-width="1.9" fill="none">
    <path d="M707.8,185 A7.6,7.6 0 1 1 710.3,179.5"/>
    <path d="M707,179.2 L710.6,182.6 L714,178.8"/>
    <path d="M752.5,169.3 Q748.4,178.4 752.5,187.6 M766,169.3 Q770.1,178.4 766,187.6"/>
    <path d="M753.5,177.9 H764 M760.5,174.4 L764,177.9 L760.5,181.4" stroke-width="2.1"/>
    <circle cx="797" cy="172.9" r="4.3"/>
    <path d="M789.2,188 A7.9,7.5 0 0 1 805,188"/>
  </g>
  <line x1="731.4" y1="163.3" x2="731.4" y2="192.6" stroke="#dcd9d5" stroke-width="1"/>
  <path d="M1060.3,174.3 L1069,182.3 M1069,174.3 L1060.3,182.3" stroke="#56514d" stroke-width="1.4"/>
</svg>
<div class="a" style="left:816px;top:159px;width:159.5px;height:37.5px;border:1px solid #8b8580;border-radius:4px;background:#faf9f8"></div>
<div class="t" style="left:833.8px;top:171.5px;font-size:16.3px;letter-spacing:0px;-webkit-text-stroke:0.45px #161513">Fit to Canvas</div>
<svg width="1917" height="861" style="left:0;top:0"><path d="M946.7,174.8 H958.1 L952.4,181.5 Z" fill="#161513"/><path d="M1224.5,174.8 H1235.5 L1230,181 Z" fill="#161513"/></svg>
<div class="inp" style="left:980.5px;top:159px;width:71px;height:37.5px"></div>
<div class="t" style="left:993px;top:171px;font-size:16.5px;color:#312d2a">auto</div>
<div class="inp" style="left:1077.5px;top:159px;width:72px;height:37.5px"></div>
<div class="t" style="left:1090.4px;top:171px;font-size:16.5px;color:#312d2a">auto</div>
<div class="t" style="left:1166.5px;top:172px;font-size:16px;color:#161513;letter-spacing:-0.2px;-webkit-text-stroke:0.45px #161513">100%</div>
<div class="a" style="left:1298.4px;top:159.2px;width:226.2px;height:37.9px;border:1px solid #8b8580;border-radius:4px;background:#ebe9e6;overflow:hidden">
  <div class="a" style="left:63px;top:0;width:90px;height:37px;background:#fcfbfa;border-left:1px solid #8b8580;border-right:1px solid #8b8580"></div>
</div>
<div class="t" style="left:1315.6px;top:170.3px;font-size:16.5px;color:#56514d">Live</div>
<div class="t" style="left:1380px;top:170.3px;font-size:16.4px;color:#161513;letter-spacing:0px;-webkit-text-stroke:0.45px #161513">Design</div>
<div class="t" style="left:1469.6px;top:170.3px;font-size:16.5px;color:#56514d">Code</div>

<!-- CANVAS -->
<div id="canvas" class="a"></div>
<div class="a" style="left:675px;top:206px;width:12px;height:625px;background:linear-gradient(to right,#dad7d3,#e5e2de)"></div>
<div class="a" style="left:1527px;top:206px;width:8px;height:625px;background:linear-gradient(to right,#e5e2de,#dcd9d5)"></div>
<div class="a" style="left:690px;top:225px;width:827px;height:588px;background:#faf9f8;box-shadow:0 1px 4px rgba(0,0,0,0.12)"></div>
<div class="a" style="left:690px;top:225px;width:827px;height:71px;background:#f0eeec;border-bottom:1px solid #d8d5d1"></div>
<div class="t" style="left:820.5px;top:250.4px;font-size:21.5px;color:#161513;letter-spacing:0.65px;-webkit-text-stroke:0.35px #161513">My Application</div>
<div class="t" style="left:765.2px;top:369.7px;font-size:24px;color:#161513;letter-spacing:1.4px;-webkit-text-stroke:0.55px #161513">main</div>
<svg width="1917" height="861" style="left:0;top:0">
  <!-- cube -->
  <g stroke="#8e5412" stroke-width="3" fill="none" stroke-linejoin="round">
    <path d="M787,243.2 L801.5,251.6 V268.4 L787,276.2 L772.5,268.4 V251.6 Z"/>
    <path d="M772.5,251.6 L787,260 L801.5,251.6 M787,260 V276.2"/>
  </g>
  <!-- gear -->
  <g stroke="#161513" stroke-width="2.3" fill="none" stroke-linejoin="miter">
    <circle cx="1250.5" cy="260" r="3.2"/>
    <path d="M1248.35,251.98 L1248.38,247.99 L1252.62,247.99 L1252.65,251.98 A8.3,8.3 0 0 1 1254.65,252.81 L1257.50,250.01 L1260.49,253.00 L1257.69,255.85 A8.3,8.3 0 0 1 1258.52,257.85 L1262.51,257.88 L1262.51,262.12 L1258.52,262.15 A8.3,8.3 0 0 1 1257.69,264.15 L1260.49,267.00 L1257.50,269.99 L1254.65,267.19 A8.3,8.3 0 0 1 1252.65,268.02 L1252.62,272.01 L1248.38,272.01 L1248.35,268.02 A8.3,8.3 0 0 1 1246.35,267.19 L1243.50,269.99 L1240.51,267.00 L1243.31,264.15 A8.3,8.3 0 0 1 1242.48,262.15 L1238.49,262.12 L1238.49,257.88 L1242.48,257.85 A8.3,8.3 0 0 1 1243.31,255.85 L1240.51,253.00 L1243.50,250.01 L1246.35,252.81 A8.3,8.3 0 0 1 1248.35,251.98 Z"/>
  </g>
  <!-- thumbs up -->
  <g stroke="#161513" stroke-width="2.3" fill="none" stroke-linejoin="miter">
    <path d="M1298.3,257.8 H1306.6 L1308,248.3 H1309.6 L1315.7,259.3 V271.7 H1301.2 Z M1315.7,259.3 H1321.8 V271.7 H1315.7"/>
  </g>
  <!-- bookmark plus -->
  <g stroke="#161513" stroke-width="2.3" fill="none">
    <path d="M1359.7,248.3 H1378.5 V271 L1369.1,263.3 L1359.7,271 Z"/>
    <path d="M1369.1,252.2 V260 M1365.2,256.1 H1373"/>
  </g>
  <defs><clipPath id="avc"><rect x="1403.3" y="230.8" width="58.8" height="57.9" rx="5"/></clipPath></defs>
  <g clip-path="url(#avc)">
    <rect x="1403.3" y="230.8" width="58.8" height="57.9" fill="#9a5130"/>
    <g stroke="#73361c" stroke-width="1.3" fill="none" opacity="0.85"><circle cx="1468" cy="296" r="6"/><circle cx="1468" cy="296" r="10"/><circle cx="1468" cy="296" r="14"/><circle cx="1468" cy="296" r="18"/><circle cx="1468" cy="296" r="22"/><circle cx="1468" cy="296" r="26"/><circle cx="1468" cy="296" r="30"/><circle cx="1468" cy="296" r="34"/><circle cx="1468" cy="296" r="38"/><circle cx="1468" cy="296" r="42"/><circle cx="1468" cy="296" r="46"/><circle cx="1468" cy="296" r="50"/><circle cx="1468" cy="296" r="54"/><circle cx="1468" cy="296" r="58"/><circle cx="1468" cy="296" r="62"/><circle cx="1468" cy="296" r="66"/><circle cx="1468" cy="296" r="70"/><circle cx="1468" cy="296" r="74"/><circle cx="1468" cy="296" r="78"/></g>
    <g stroke="#73361c" stroke-width="1.2" fill="none" opacity="0.6"><circle cx="1425" cy="228" r="8"/><circle cx="1425" cy="228" r="13"/><circle cx="1425" cy="228" r="18"/></g>
  </g>
  <!-- avatar person -->
  <g stroke="#fff" stroke-width="2.2" fill="none">
    <circle cx="1432.3" cy="254.3" r="3.5"/>
    <path d="M1424.3,269.3 A8,6.8 0 0 1 1440.3,269.3"/>
  </g>
</svg>

<!-- BANDS + FOOTER -->
<svg width="827" height="16" style="left:690px;top:465px">
  <rect x="0" y="0" width="827" height="16" fill="#46707f"/>
  <g fill="#2f4b57">
    <path d="M2,0 H15 L11,16 H0 Z"/><path d="M26,0 H36 L44,16 H33 Z"/><path d="M56,0 H72 L70,16 H58 Z"/>
  </g>
  <path d="M86,0 H125 L130,16 H91 Z" fill="#c8b79b"/>
  <path d="M113,0 H150 L156,16 H118 Z" fill="#8d7352"/>
  <path d="M124,0 H137 L139,9 Z" fill="#4a2b28"/>
  <path d="M137,0 H155 L162,16 H140 Z" fill="#c5ad8a"/>
  <path d="M155,0 H177 L183,16 H162 Z" fill="#8a6d4a"/>
  <path d="M177,0 H199 L206,16 H183 Z" fill="#5a2a1f"/>
  <path d="M199,0 H333 L336,16 H206 Z" fill="#e8dbbf"/>
  <g stroke="#cdb894" stroke-width="1" fill="none">
    <path d="M215,12 q4,-9 8,-2 q3,5 6,-4"/><path d="M240,8 q3,-6 6,0 q3,6 6,0"/><path d="M270,13 q4,-10 8,-3 q4,6 7,-5"/><path d="M300,9 q4,-7 7,0 q3,6 6,-1"/>
  </g>
  <path d="M333,0 H346 L349,16 H336 Z" fill="#c4b190"/>
  <path d="M346,0 H361 L368,16 H349 Z" fill="#8c8790"/>
  <path d="M361,0 H394 L388,16 H368 Z" fill="#c2af8f"/>
  <path d="M374,0 H386 L384,16 H376 Z" fill="#8c8790"/>
  <path d="M394,0 H455 L445,16 H388 Z" fill="#9c4c26"/>
  <path d="M402,0 H420 L412,16 H396 Z" fill="#a9572d"/>
  <path d="M455,0 H576 L578,16 H445 Z" fill="#eba83e"/>
  <g stroke="#b96a2a" stroke-width="1.2">
    <path d="M466,13 L471,5"/><path d="M480,12 L487,3"/><path d="M497,14 L503,6"/><path d="M515,12 L520,4"/><path d="M531,13 L536,5"/><path d="M548,14 L553,6"/><path d="M563,12 L568,4"/>
  </g>
  <path d="M576,0 H640 L643,16 H578 Z" fill="#df5234"/>
  <path d="M586,0 H605 L597,16 H590 Z" fill="#e98c3c"/>
  <path d="M640,0 H827 V16 H643 Z" fill="#46707f"/>
  <g fill="#2f4a56">
    <path d="M660,0 H680 L688,16 H668 Z"/><path d="M700,0 H712 L722,16 H708 Z"/><path d="M735,0 H760 L755,16 H740 Z"/><path d="M780,0 H795 L798,16 H784 Z"/><path d="M805,0 H820 L824,16 H810 Z"/>
  </g>
</svg>
<svg width="827" height="10" style="left:690px;top:672px">
  <rect x="0" y="0" width="827" height="10" fill="#d8954e"/>
  <rect x="0" y="0" width="40" height="10" fill="#e37b66"/>
  <g fill="#8e4a1e">
    <path d="M50,0 H67 Q66,8 58,6 Z"/><path d="M100,2 Q104,-2 108,3 L112,10 H101 Q98,6 100,2 Z"/><path d="M193,0 H208 L214,10 H197 Z"/>
  </g>
  <path d="M246,0 H404 L406,10 H248 Z" fill="#0a8b8c"/>
  <g fill="#0b7274"><path d="M260,0 H282 L290,10 H268 Z"/><path d="M330,0 H360 L368,10 H340 Z"/><path d="M378,0 H404 L406,10 H380 Z"/></g>
  <path d="M404,0 H437 L438,10 H406 Z" fill="#1a1614"/>
  <path d="M412,2 L426,10 H417 L408,4 Z" fill="#e8e6e4"/>
  <path d="M437,0 H496 L500,10 H438 Z" fill="#1a1614"/>
  <path d="M496,0 H522 L532,10 H500 Z" fill="#ececea"/>
  <path d="M522,0 H554 L546,10 H532 Z" fill="#1a1614"/>
  <path d="M554,0 H763 V10 H546 Z" fill="#e9d0d4"/>
  <path d="M763,0 H804 Q806,8 800,10 H763 Z" fill="#e9bb74"/>
  <path d="M804,0 H827 V10 H800 Q806,8 804,0 Z" fill="#0d0b0a"/>
</svg>
<div class="a" style="left:690px;top:682px;width:827px;height:131.5px;background:#312d2a"></div>
<div class="t" style="left:754.9px;top:706.3px;font-size:18.7px;color:#fff">About</div>
<div class="t" style="left:1109.3px;top:706.3px;font-size:18.7px;color:#fff">Footer Item 2</div>
<div class="t" style="left:754.9px;top:739.5px;font-size:18.7px;color:#fff">Footer Item 1</div>
<div class="t" style="left:1109.3px;top:739.5px;font-size:18.7px;color:#fff">Footer Item 3</div>
<div class="t" style="left:754.9px;top:772.2px;font-size:18.6px;color:#b9b4ae;letter-spacing:0px">Created with Visual Builder, Copyright © 2022</div>

<!-- STATUS BAR -->
<div class="a" style="left:675px;top:831px;width:860px;height:30px;background:#fff"></div>
<svg width="60" height="32" style="left:675px;top:830px">
  <path d="M47,0 L61,16 L47,32" stroke="#e5e2de" stroke-width="1.2" fill="#fff"/>
</svg>
<div class="t" style="left:686.7px;top:840.5px;font-size:13.5px;color:#161513">Page</div>
<svg width="30" height="30" style="left:1460px;top:834px">
  <g stroke="#161513" stroke-width="1.6" fill="none">
    <circle cx="12" cy="12.5" r="6.2"/><path d="M12,12.5 L9.5,9.5"/><path d="M9.5,4 H14.5"/>
  </g>
</svg>
<div class="t" style="left:1486.6px;top:840.5px;font-size:13.5px;color:#161513">2.58 s</div>

<!-- PROPERTIES -->
<div id="pstrip" class="a"></div>
<div class="a" style="left:1874px;top:260px;width:1px;height:601px;background:#dcd9d5"></div>
<div class="a" style="left:1535px;top:150px;width:1px;height:711px;background:#dcd9d5"></div>
<div class="a" style="left:1874px;top:260px;width:43px;height:12px;background:linear-gradient(to bottom,rgba(0,0,0,0.05),rgba(0,0,0,0))"></div>
<div class="a" style="left:1874px;top:150px;width:43px;height:110px;background:#faf9f8"></div>
<div class="t" style="left:1905px;top:167.2px;font-size:16.5px;color:#161513;transform:rotate(90deg);transform-origin:left top;letter-spacing:0.1px">Properties</div>
<div class="t" style="left:1556px;top:171.5px;font-size:15.7px;letter-spacing:0.1px;-webkit-text-stroke:0.45px #161513">Page</div>
<svg width="1917" height="861" style="left:0;top:0">
  <g stroke="#161513" stroke-width="1.8">
    <line x1="1828.5" y1="172.3" x2="1842" y2="172.3"/><line x1="1828.5" y1="178.3" x2="1842" y2="178.3"/><line x1="1828.5" y1="184.2" x2="1842" y2="184.2"/>
  </g>
</svg>
<div class="t" style="left:1556px;top:230.5px;font-size:16.3px;color:#56514d">General</div>
<div class="t" style="left:1632.7px;top:230.5px;font-size:16.3px;color:#56514d;letter-spacing:0.1px">Events</div>
<div class="a" style="left:1556px;top:261.5px;width:297.5px;height:1px;background:#dcd9d5"></div>
<div class="a" style="left:1556px;top:258px;width:56px;height:4px;background:#161513"></div>
<div class="t" style="left:1556px;top:276.1px;font-size:16.3px;letter-spacing:0.35px;-webkit-text-stroke:0.45px #161513">Title</div>
<div class="inp" style="left:1556px;top:303.2px;width:292.5px;height:37.5px"></div>
<div class="t" style="left:1569.4px;top:313.8px;font-size:16.5px;color:#4a4541">main</div>
<div class="t" style="left:1556px;top:359.9px;font-size:16.3px;letter-spacing:0.25px;-webkit-text-stroke:0.45px #161513">Description</div>
<div class="inp" style="left:1556px;top:386px;width:292.5px;height:37.5px"></div>
<div class="a" style="left:1556px;top:441.5px;width:194.7px;height:37px;border:1px solid #8b8580;border-radius:4px;background:#faf9f8"></div>
<div class="t" style="left:1573.3px;top:451.6px;font-size:16.4px;letter-spacing:0px;-webkit-text-stroke:0.45px #161513">Select Page Template</div>
<div class="t" style="left:1556px;top:496px;font-size:16.3px;letter-spacing:0.25px;-webkit-text-stroke:0.45px #161513">Preferred Layout</div>
<div class="a" style="left:1556.3px;top:521.3px;width:93.2px;height:94.1px;border:1px solid #8b8580;background:#fcfbfa"></div>
<div class="a" style="left:1664.5px;top:521.3px;width:93.2px;height:94.1px;border:1px solid #8b8580;background:#ebe9e6"></div>
<div class="a" style="left:1556.3px;top:633.6px;width:93.2px;height:94px;border:1px solid #8b8580;background:#ebe9e6"></div>
<div class="t" style="left:1587.5px;top:593.5px;font-size:16.5px;color:#46423e">Grid</div>
<div class="t" style="left:1695.5px;top:593.5px;font-size:16.5px;color:#46423e">Flex</div>
<div class="t" style="left:1583px;top:706.3px;font-size:16.5px;color:#46423e">Block</div>
<svg width="1917" height="861" style="left:0;top:0">
  <g stroke="#161513" stroke-width="3.6" fill="none">
    <rect x="1584.5" y="535.4" width="37.3" height="37.3"/>
    <rect x="1692.7" y="535.4" width="37.3" height="37.3"/>
    <rect x="1584.5" y="647.6" width="37.3" height="37.3"/>
  </g>
  <g fill="#161513">
    <rect x="1592" y="541.5" width="3.5" height="25"/><rect x="1601.4" y="541.5" width="3.5" height="25"/><rect x="1610.8" y="541.5" width="3.5" height="25"/>
    <rect x="1591.5" y="654.6" width="10.5" height="10.5"/><rect x="1604.5" y="654.6" width="10.5" height="10.5"/>
    <rect x="1591.5" y="667.4" width="10.5" height="10.5"/><rect x="1604.5" y="667.4" width="10.5" height="10.5"/>
  </g>
  <g stroke="#161513" stroke-width="3.4" fill="none">
    <rect x="1698.8" y="543.6" width="8.2" height="20.6"/><rect x="1715.7" y="543.6" width="9.2" height="10.6"/>
  </g>
</svg>

</body></html>
